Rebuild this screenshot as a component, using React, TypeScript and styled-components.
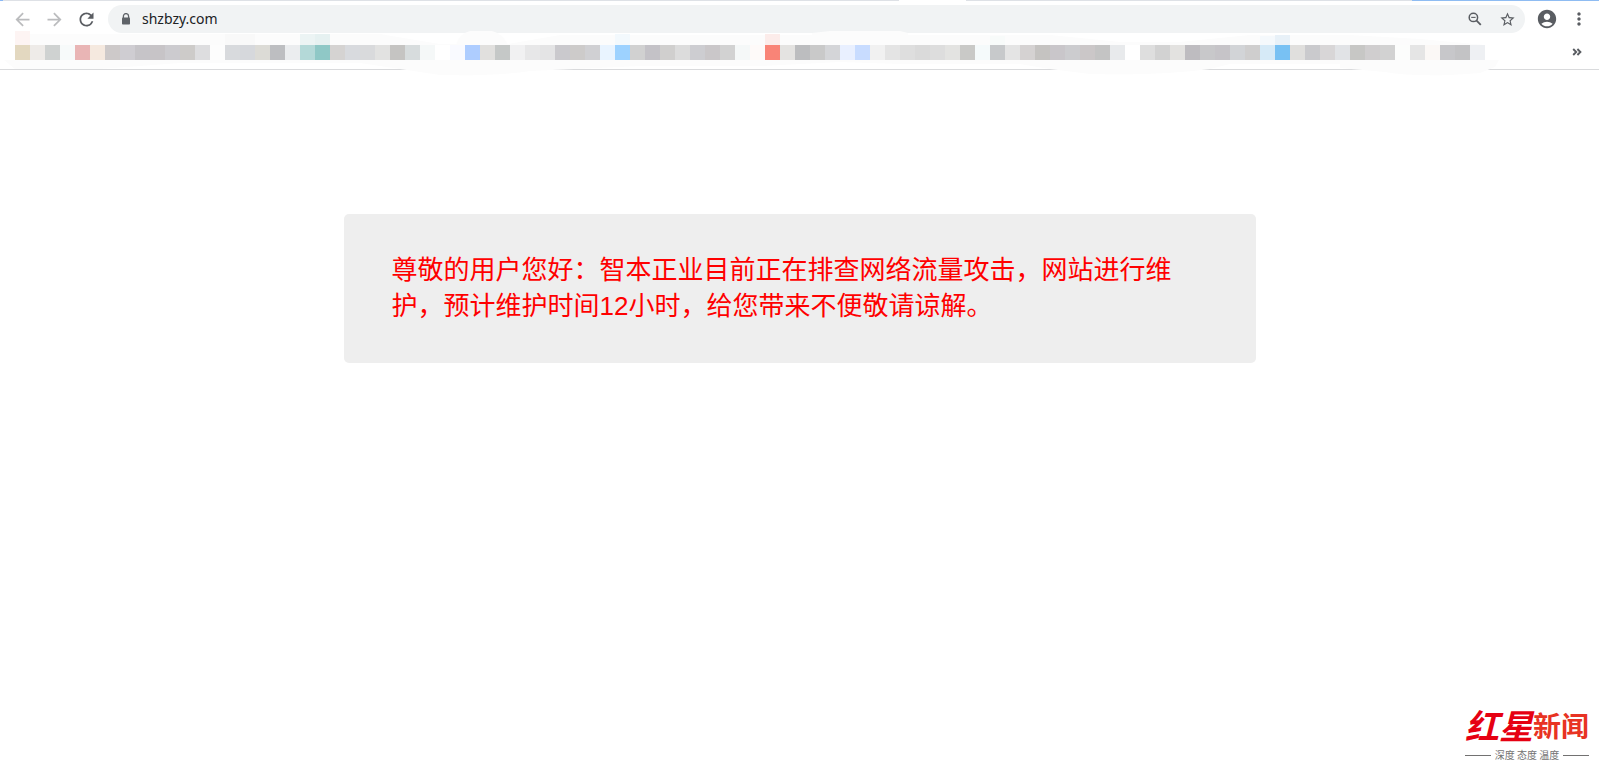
import React from 'react';
import styled, { createGlobalStyle } from 'styled-components';
import {
  MdArrowBack,
  MdArrowForward,
  MdRefresh,
  MdLock,
  MdStarBorder,
  MdAccountCircle,
  MdMoreVert,
} from 'react-icons/md';

const GlobalStyle = createGlobalStyle`
  * { box-sizing: border-box; }
  body {
    margin: 0;
    background: #fff;
    font-family: "Liberation Sans", "Noto Sans CJK SC", sans-serif;
  }
`;

const Page = styled.div`
  min-height: 100vh;
  display: flex;
  flex-direction: column;
  overflow: hidden;
`;

const Header = styled.header`
  border-bottom: 1px solid #d9dadc;
`;

const TabEdge = styled.div`
  display: flex;
  height: 1px;
`;

const EdgePart = styled.span<{ $width?: number; $color: string }>`
  flex: ${(p) => (p.$width ? `0 1 ${p.$width}px` : '1 1 0')};
  background: ${(p) => p.$color};
`;

const Toolbar = styled.div`
  display: flex;
  align-items: center;
  padding: 4px 4px 0 6px;
`;

const IconButton = styled.button<{ $muted?: boolean }>`
  flex: none;
  display: flex;
  align-items: center;
  justify-content: center;
  width: 32px;
  height: 28px;
  padding: 0;
  border: 0;
  background: none;
  color: ${(p) => (p.$muted ? '#bbbcbe' : '#5a5d62')};
`;

const AddressBar = styled.label`
  flex: 1;
  min-width: 0;
  display: flex;
  align-items: center;
  height: 28px;
  margin: 0 6px;
  padding: 0 2px 0 12px;
  border-radius: 14px;
  background: #f1f3f4;
  color: #5f6368;
`;

const AddressInput = styled.input`
  flex: 1;
  min-width: 0;
  height: 28px;
  margin-left: 10px;
  padding: 0 0 2px;
  border: 0;
  outline: 0;
  background: none;
  color: #202124;
  font-family: "Noto Sans", sans-serif;
  font-size: 14px;
`;

const BookmarksBar = styled.div`
  position: relative;
  display: flex;
  align-items: center;
  justify-content: space-between;
  height: 36px;
  padding: 2px 6px 0 15px;
`;

const Haze = styled.svg`
  position: absolute;
  top: -3px;
  left: 0;
  width: 1599px;
  height: 46px;
  pointer-events: none;
`;

const Mosaic = styled.div`
  position: relative;
  flex: 0 1 auto;
  min-width: 0;
  display: flex;
  overflow: hidden;
`;

const Tile = styled.span<{ $color: string }>`
  flex: none;
  width: 15px;
  height: 15px;
  background: ${(p) => p.$color};
`;

const Main = styled.main`
  padding: 144px 16px 40px;
`;

const Notice = styled.section`
  max-width: 912px;
  margin: 0 auto;
  padding: 38px 80px 39px 48px;
  border-radius: 5px;
  background: #eee;
`;

const NoticeText = styled.p`
  margin: 0;
  color: #f00;
  font-size: 26px;
  line-height: 36px;
`;

const Brand = styled.footer`
  align-self: flex-end;
  width: 124px;
  margin-top: auto;
  margin-right: 10px;
  margin-bottom: 9px;
`;

const BrandName = styled.div`
  display: flex;
  align-items: center;
  justify-content: space-between;
  height: 46px;
  font-family: "Noto Sans CJK SC", sans-serif;
  font-weight: 700;
  white-space: nowrap;
`;

const BrandScript = styled.span`
  color: #e60012;
  font-size: 34px;
  line-height: 46px;
  font-style: italic;
`;

const BrandNews = styled.span`
  color: #e83323;
  font-size: 28px;
  line-height: 46px;
`;

const Tagline = styled.div`
  display: flex;
  align-items: center;
  gap: 4px;
  color: #727171;
  font-family: "Noto Sans CJK SC", sans-serif;
  font-size: 10px;
  line-height: 14px;
  white-space: nowrap;

  &::before,
  &::after {
    content: "";
    flex: 1;
    height: 1px;
    background: #727171;
  }
`;

const tiles = [
  '#e3d8c0', '#eeebe8', '#cfd2d1', '#f7fafa', '#e9b5b5', '#f5e9df', '#cdc9c9',
  '#cfcdd2', '#c6c4c8', '#c7c4c7', '#cccbcf', '#cdcbc9', '#dddddf', '#fdfdfd',
  '#d8dadd', '#d6d8dc', '#dcdbd6', '#bdbec1', '#ebedef', '#b4d9d8', '#8fc8c6',
  '#d5d3d2', '#d8dade', '#d9dadc', '#e2e2e1', '#c5c4c2', '#d7dcdd', '#f5f8f8',
  '#ffffff', '#f9faff', '#aecdff', '#e1e0de', '#c5c8c7', '#f1f1f2', '#e7e7e8',
  '#e4e4e5', '#cac9cd', '#cdcbca', '#d0d0d3', '#e9f4ff', '#9dd2ff', '#d1d1d1',
  '#c4c2c7', '#d0cfce', '#dcdcdc', '#cdcdd1', '#cac7c9', '#d2d2d2', '#f5f8f8',
  '#fefaf9', '#f98477', '#e4e3e1', '#bcbdbf', '#c9c9c9', '#d4d5d8', '#e9f0ff',
  '#c8dcff', '#f1f1f1', '#e4e4e4', '#dedede', '#dadada', '#dddddd', '#e3e3e1',
  '#c9c9c7', '#f5fafb', '#c7c9cb', '#e4e4e4', '#d5d2d2', '#c5c3c1', '#c9c6ca',
  '#cccccf', '#cbc7c8', '#c4c4c4', '#e8eaec', '#ffffff', '#dedede', '#d2d2d2',
  '#e3e2e0', '#bebcc0', '#c8c8ca', '#c6c4c8', '#d2d4d7', '#cfcece', '#d6eaf7',
  '#78c1f3', '#e0dfdd', '#cacacd', '#d8d6d7', '#e1e3e6', '#c7c7c5', '#d0cecf',
  '#d2d2d2', '#fcfdfc', '#e5e5e5', '#fbf8f6', '#c7c7ca', '#c3c3c5', '#eef0f3',
];

const tints = [
  { x: 15, y: 1, width: 15, color: '#fdf4f3' },
  { x: 225, y: 4, width: 30, color: '#f9f9f9' },
  { x: 300, y: 4, width: 15, color: '#ecf4f4' },
  { x: 315, y: 4, width: 15, color: '#e6f1f1' },
  { x: 615, y: 4, width: 15, color: '#f3f9fd' },
  { x: 765, y: 4, width: 15, color: '#fcecea' },
  { x: 990, y: 6, width: 15, color: '#f8fbfa' },
  { x: 1260, y: 6, width: 15, color: '#f5f9fc' },
  { x: 1275, y: 5, width: 15, color: '#e8f1f8' },
];

export default function App() {
  return (
    <Page>
      <GlobalStyle />
      <Header>
        <TabEdge>
          <EdgePart $width={3} $color="#8ab8f5" />
          <EdgePart $width={896} $color="#dee1e6" />
          <EdgePart $width={67} $color="#fff" />
          <EdgePart $width={446} $color="#dee1e6" />
          <EdgePart $color="#8fbcf2" />
        </TabEdge>
        <Toolbar>
          <IconButton type="button" aria-label="后退" $muted>
            <MdArrowBack size={21} />
          </IconButton>
          <IconButton type="button" aria-label="前进" $muted>
            <MdArrowForward size={21} />
          </IconButton>
          <IconButton type="button" aria-label="重新加载">
            <MdRefresh size={21} />
          </IconButton>
          <AddressBar>
            <svg width="12" height="12" viewBox="0 0 12 12" aria-hidden="true">
              <path d="M3.4 5V3.2a2.6 2.6 0 0 1 5.2 0V5" fill="none" stroke="currentColor" strokeWidth="1.3" />
              <rect x="2" y="4.6" width="8" height="7" rx="0.8" fill="currentColor" />
            </svg>
            <AddressInput type="text" aria-label="地址" defaultValue="shzbzy.com" />
            <IconButton type="button" aria-label="缩放">
              <svg width="14" height="14" viewBox="0 0 14 14" fill="none" stroke="currentColor">
                <circle cx="5.4" cy="5.4" r="4.2" strokeWidth="1.5" />
                <path d="M8.6 8.6l4.2 4.2" strokeWidth="1.8" />
                <path d="M3.2 5.4h4.4" strokeWidth="1.1" />
              </svg>
            </IconButton>
            <IconButton type="button" aria-label="收藏">
              <MdStarBorder size={17} />
            </IconButton>
          </AddressBar>
          <IconButton type="button" aria-label="用户">
            <MdAccountCircle size={22} />
          </IconButton>
          <IconButton type="button" aria-label="菜单">
            <MdMoreVert size={20} />
          </IconButton>
        </Toolbar>
        <BookmarksBar>
          <Haze viewBox="0 0 1599 46" aria-hidden="true">
            <g fill="#fcfcfc">
              <path d="M15 4H380L440 14H508L560 5H1050L1120 12H1180L1250 5H1350L1420 9L1485 15V30H1499L1495 37L1480 43Q1420 48 1385 42L1340 38V34H1230L1210 39Q1160 46 1090 44L1050 39L1020 34H900L840 32L760 36H640L530 41Q500 46 440 45L400 39L360 33H180L100 39H15L4 30H15Z" />
              <path d="M456 15Q460 3 470 1H492Q502 3 508 15Z" />
              <path d="M812 3L830 1H900L908 3V8H812Z" />
            </g>
            {tints.map((t) => (
              <rect key={t.x} x={t.x} y={t.y} width={t.width} height={15 - t.y} fill={t.color} />
            ))}
          </Haze>
          <Mosaic>
            {tiles.map((color, i) => (
              <Tile key={i} $color={color} />
            ))}
          </Mosaic>
          <IconButton type="button" aria-label="更多书签">
            <svg width="10" height="8" viewBox="0 0 10 8" fill="none" stroke="currentColor" strokeWidth="1.9">
              <path d="M1.2 1 4.2 4l-3 3M5.4 1l3 3-3 3" />
            </svg>
          </IconButton>
        </BookmarksBar>
      </Header>
      <Main>
        <Notice>
          <NoticeText>
            尊敬的用户您好：智本正业目前正在排查网络流量攻击，网站进行维护，预计维护时间12小时，给您带来不便敬请谅解。
          </NoticeText>
        </Notice>
      </Main>
      <Brand>
        <BrandName>
          <BrandScript>红星</BrandScript>
          <BrandNews>新闻</BrandNews>
        </BrandName>
        <Tagline>深度 态度 温度</Tagline>
      </Brand>
    </Page>
  );
}
